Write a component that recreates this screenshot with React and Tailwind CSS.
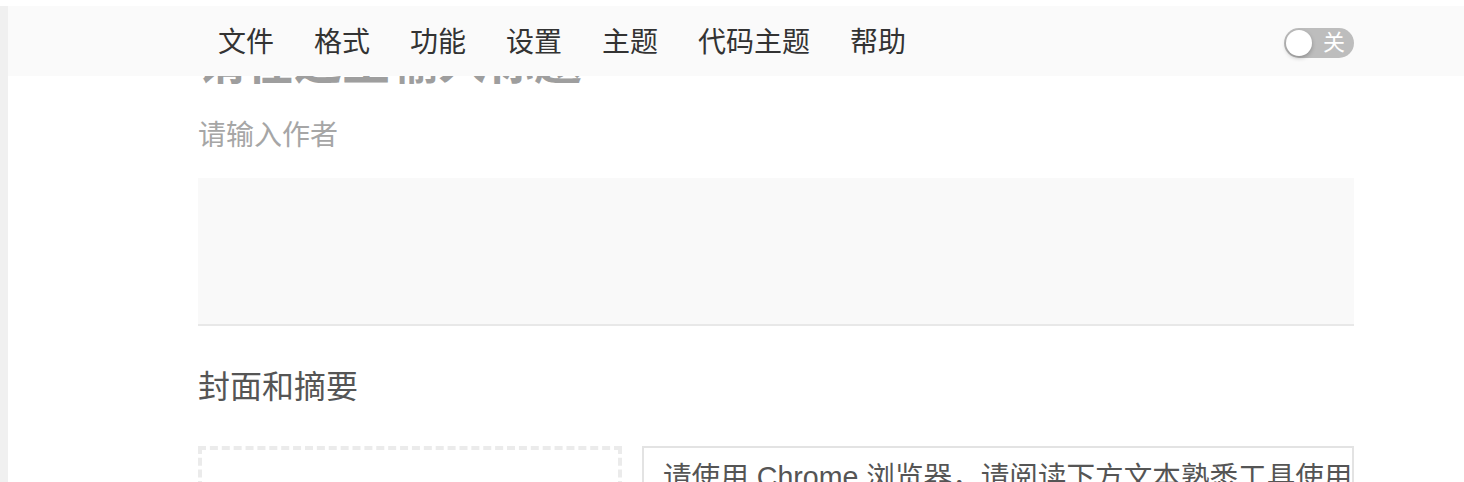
import { useState } from "react";

const menus = ["文件", "格式", "功能", "设置", "主题", "代码主题", "帮助"];

export default function App() {
  const [dark, setDark] = useState(false);

  return (
    <div
      className="h-[482px] overflow-hidden bg-white pt-[6px]"
      style={{ fontFamily: '"Liberation Sans", "Noto Sans CJK SC", sans-serif' }}
    >
      <div className="flex h-full">
        {/* left rail */}
        <div className="w-[8px] shrink-0 bg-[#f0f0f0]"></div>

        <div className="relative flex-1">
          {/* top menu bar, floats over the editor */}
          <header className="absolute top-0 left-0 right-0 z-10 h-[70px] bg-[#fafafa]">
            <div className="ml-[190px] flex h-full w-[1156px] items-center justify-between pt-[3px]">
              <nav className="flex items-center gap-[40px] pl-[20px]">
                {menus.map((m) => (
                  <span key={m} className="text-[28px] leading-[1.2] text-[#333]">
                    {m}
                  </span>
                ))}
              </nav>
              <button
                onClick={() => setDark(!dark)}
                className="flex h-[30px] w-[70px] items-center rounded-full bg-[#bdbdbd] pl-[2px]"
              >
                <span className="h-[26px] w-[26px] rounded-full bg-white shadow-[0_2px_4px_rgba(0,0,0,0.25)]"></span>
                <span className="ml-[11px] text-[22px] leading-none text-white">关</span>
              </button>
            </div>
          </header>

          <main className="ml-[190px] w-[1156px] pt-[33px]">
            <div className="text-[48px] leading-none font-bold text-[#9e9e9e]">请在这里输入标题</div>
            <div className="mt-[35px] text-[28px] leading-none text-[#a6a6a6]">请输入作者</div>

            <div className="mt-[28px] h-[148px] border-b-2 border-[#e8e8e8] bg-[#f9f9f9]"></div>

            <div className="mt-[45px] text-[32px] leading-none text-[#555]">封面和摘要</div>

            <div className="mt-[43px] flex gap-[20px]">
              <div className="h-[160px] w-[424px] border-4 border-dashed border-[#ebebeb]"></div>
              <div className="h-[160px] flex-1 overflow-hidden border-2 border-[#e3e3e3] px-[19px] pt-[15px]">
                <p className="whitespace-nowrap text-[28.6px] leading-none text-[#555]">
                  请使用 Chrome 浏览器，请阅读下方文本熟悉工具使用
                </p>
              </div>
            </div>
          </main>
        </div>
      </div>
    </div>
  );
}
